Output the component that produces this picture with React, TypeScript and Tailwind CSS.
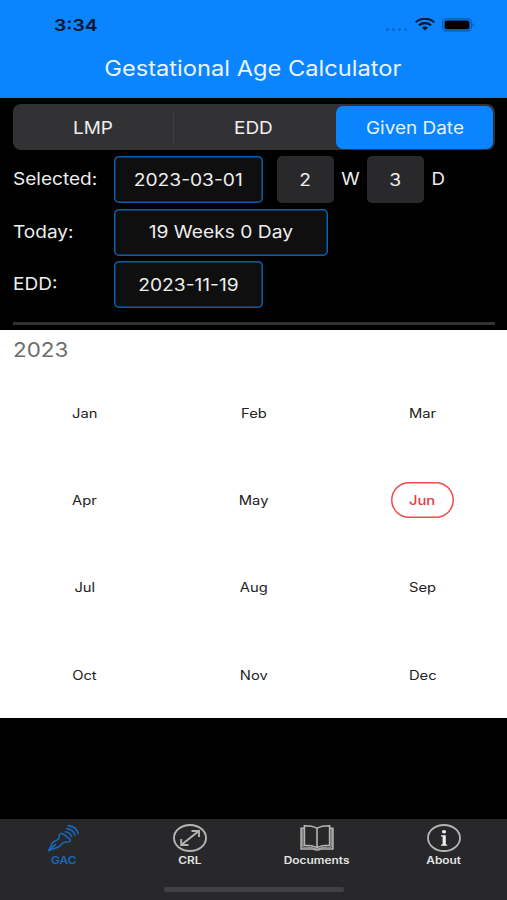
import React from 'react';
import clsx from 'clsx';

type TabName = 'GAC' | 'CRL' | 'Documents' | 'About';

const SEGMENTS = ['LMP', 'EDD', 'Given Date'];
const MONTHS = ['Jan', 'Feb', 'Mar', 'Apr', 'May', 'Jun', 'Jul', 'Aug', 'Sep', 'Oct', 'Nov', 'Dec'];
const TABS: TabName[] = ['GAC', 'CRL', 'Documents', 'About'];

// Wide lettering, used for every label in the app
const Wide = ({ children, className }: { children: React.ReactNode; className?: string }) => (
  <span className={clsx('inline-block whitespace-nowrap', className)}>{children}</span>
);

const StatusBar = () => (
  <div className="flex h-[49px] items-center pl-[54px] pr-[32px] text-[#03152b]">
    <Wide className="origin-left scale-x-[1.17] pt-px text-[16.5px] font-semibold leading-none">3:34</Wide>
    <div className="ml-auto flex items-center">
      <div className="mr-[8px] mt-[9px] flex gap-[3px]">
        {[0, 1, 2, 3].map((dot) => (
          <span key={dot} className="h-[3px] w-[3px] rounded-full bg-[#0868cc]" />
        ))}
      </div>
      <svg width="20" height="13" viewBox="0 0 20 13" fill="none" stroke="currentColor" strokeWidth="2.1" className="mr-[7px]">
        <path d="M0.8 4.2C6 -0.4 14 -0.4 19.2 4.2" />
        <path d="M4 7.3C7.4 4.4 12.6 4.4 16 7.3" />
        <path d="M7 9.6C8.8 8.2 11.2 8.2 13 9.6L10 12.4Z" fill="currentColor" stroke="none" />
      </svg>
      <svg width="33" height="14" viewBox="0 0 33 14">
        <rect x="0.7" y="0.9" width="28.6" height="12" rx="3.6" fill="none" stroke="#0757ac" strokeWidth="1.1" />
        <rect x="2.5" y="2.5" width="25" height="8.8" rx="2.2" fill="#000" />
        <path d="M30.6 5C32.4 5.6 32.4 8.2 30.6 8.8Z" fill="#0757ac" />
      </svg>
    </div>
  </div>
);

const SegmentedControl = ({ selected }: { selected: string }) => (
  <div className="ml-[13px] mr-[12px] mt-[6px] flex h-[46px] items-center rounded-[8px] bg-[#323234] pr-[2px]">
    {SEGMENTS.map((name, index) => (
      <React.Fragment key={name}>
        {index === 1 && <span className="h-[33px] w-px bg-[#3f3f42]" />}
        <button
          className={clsx(
            'flex h-[43px] items-center justify-center rounded-[7px] pt-[3px] text-[17px]',
            name === selected && 'w-[157px] bg-[#0a84ff] text-[#e6f2ff]',
            name !== selected && (index === 0 ? 'w-[160px]' : 'flex-1 pr-[4px]')
          )}
        >
          <Wide className="scale-x-[1.115]">{name}</Wide>
        </button>
      </React.Fragment>
    ))}
  </div>
);

const Row = ({ label, children }: { label: string; children: React.ReactNode }) => (
  <div className="flex h-[47px] items-center">
    <div className="w-[101px] pt-[1px]">
      <Wide className="origin-left scale-x-[1.12] text-[17px]">{label}</Wide>
    </div>
    {children}
  </div>
);

const Field = ({ value, className }: { value: string; className: string }) => (
  <div
    className={clsx(
      'flex h-[47px] items-center justify-center rounded-[5px] bg-[#0f0f10] pt-[2px] shadow-[inset_0_0_0_1.5px_#0d5fae]',
      className
    )}
  >
    <Wide className="scale-x-[1.13] text-[17px]">{value}</Wide>
  </div>
);

const NumberBox = ({ value }: { value: number }) => (
  <div className="flex h-[47px] w-[57px] items-center justify-center rounded-[5px] bg-[#29292b] pt-[2px]">
    <Wide className="scale-x-[1.13] text-[17px]">{value}</Wide>
  </div>
);

const TabIcon = ({ name }: { name: TabName }) => {
  switch (name) {
    case 'GAC':
      return (
        <svg width="34" height="28" viewBox="0 0 34 28" fill="none" stroke="currentColor" strokeWidth="1.6" strokeLinejoin="round" strokeLinecap="round">
          <path d="M2.8 26.4L6.4 19C8 16.4 12.4 16.6 12.8 14.4L13.4 11C14 9.4 15.8 9 17.2 10L23.6 14.8C24.8 16 24.2 17.6 22.6 17.8L18.4 18.2C15.4 18.6 15.4 21.6 12.4 23Z" />
          <path d="M2.8 26.4L9.4 20.6" />
          <path d="M19.6 7.8C22.5 8.4 25 10.2 25.6 12.6" />
          <path d="M20.8 4.6C25 5.2 28.4 8 29 11.2" />
          <path d="M22.2 1.6C27.4 2.4 31.4 5.6 32.2 9.6" />
        </svg>
      );
    case 'CRL':
      return (
        <svg width="34" height="28" viewBox="0 0 34 28" fill="none" stroke="currentColor" strokeWidth="1.9">
          <ellipse cx="17" cy="14" rx="16" ry="13" />
          <path d="M8.5 20.8L25.5 7.2M18.5 7H26V13M8.2 15V21H15.5" />
        </svg>
      );
    case 'Documents':
      return (
        <svg width="34" height="28" viewBox="0 0 34 28" fill="none" stroke="currentColor" strokeWidth="1.6">
          <path d="M17 4.2C13.5 2.4 9 1.8 4.4 1.8V21.2C9 21.2 13.5 21.8 17 23.6C20.5 21.8 25 21.2 29.6 21.2V1.8C25 1.8 20.5 2.4 17 4.2ZM17 4.2V23.6" />
          <path d="M4.4 4.2H1.1V25H13.5C15 26.4 19 26.4 20.5 25H32.9V4.2H29.6" />
          <path d="M2.8 4.6V23.2C8 22.9 13 23.4 17 25.2C21 23.4 26 22.9 31.2 23.2V4.6" strokeWidth="1" />
        </svg>
      );
    case 'About':
      return (
        <svg width="34" height="28" viewBox="0 0 34 28" fill="none" stroke="currentColor" strokeWidth="1.8">
          <ellipse cx="17" cy="14" rx="16" ry="13" />
          <ellipse cx="17" cy="7.7" rx="2.1" ry="1.8" fill="#eee" stroke="none" />
          <path d="M14 11.2H18.8V20.4H20.2V21.8H14V20.4H15.6V12.6H14Z" fill="#eee" stroke="none" />
        </svg>
      );
  }
};

const TabBar = ({ active }: { active: TabName }) => (
  <div className="h-[81px] bg-[#28282a]">
    <div className="flex h-[68px]">
      {TABS.map((name) => (
        <button
          key={name}
          className={clsx('flex flex-1 flex-col items-center pt-[5px]', name === active ? 'text-[#1769bb]' : 'text-[#b4b4b5]')}
        >
          <TabIcon name={name} />
          <Wide
            className={clsx(
              'mt-[3px] scale-x-[1.19] text-[10px] font-semibold leading-[10px]',
              name === active ? 'text-[#1769bb]' : 'text-[#e4e4e4]'
            )}
          >
            {name}
          </Wide>
        </button>
      ))}
    </div>
    <div className="mx-auto h-[5px] w-[180px] rounded-[2px] bg-[#414143]" />
  </div>
);

const App: React.FC = () => (
  <div className="flex h-[900px] w-[507px] flex-col overflow-hidden bg-black font-['Inter','Liberation_Sans',sans-serif] text-[#eeeeee]">
    {/* Header */}
    <div className="h-[98px] bg-[#0a84ff]">
      <StatusBar />
      <h1 className="flex h-[38px] items-center justify-center pr-[2px] pt-[2px] text-[21px] text-[#eaf4ff]">
        <Wide className="scale-x-[1.127]">Gestational Age Calculator</Wide>
      </h1>
    </div>

    <SegmentedControl selected="Given Date" />

    {/* Dates */}
    <div className="mt-[6px] flex h-[152px] flex-col justify-between pl-[13px]">
      <Row label="Selected:">
        <Field value="2023-03-01" className="w-[149px]" />
        <div className="ml-[14px] flex items-center">
          <NumberBox value={2} />
          <div className="flex w-[33px] justify-center pt-[1px]">
            <Wide className="scale-x-[1.1] text-[17px]">W</Wide>
          </div>
          <NumberBox value={3} />
          <div className="flex w-[29px] justify-center pt-[1px]">
            <Wide className="scale-x-[1.1] text-[17px]">D</Wide>
          </div>
        </div>
      </Row>
      <Row label="Today:">
        <Field value="19 Weeks 0 Day" className="w-[214px]" />
      </Row>
      <Row label="EDD:">
        <Field value="2023-11-19" className="w-[149px]" />
      </Row>
    </div>
    <div className="ml-[13px] mr-[12px] mt-[14px] h-[3px] bg-[#323233]" />

    {/* Calendar */}
    <div className="mt-[5px] flex h-[388px] flex-col bg-white">
      <div className="flex h-[39px] items-center pl-[13px] text-[20px] text-[#6e6e6e]">
        <Wide className="origin-left scale-x-[1.12]">2023</Wide>
      </div>
      <div className="grid flex-1 grid-cols-3 grid-rows-4 text-[12.5px] text-[#222222]">
        {MONTHS.map((month) => (
          <div key={month} className="flex items-center justify-center">
            <div
              className={clsx(
                'flex h-[36px] w-[63px] items-center justify-center rounded-full pt-[3px]',
                month === 'Jun' && 'font-medium text-[#e23a3e] shadow-[inset_0_0_0_1.5px_#ed4a4d]'
              )}
            >
              <Wide className="scale-x-[1.18]">{month}</Wide>
            </div>
          </div>
        ))}
      </div>
    </div>

    <div className="flex-1" />
    <TabBar active="GAC" />
  </div>
);

export default App;
